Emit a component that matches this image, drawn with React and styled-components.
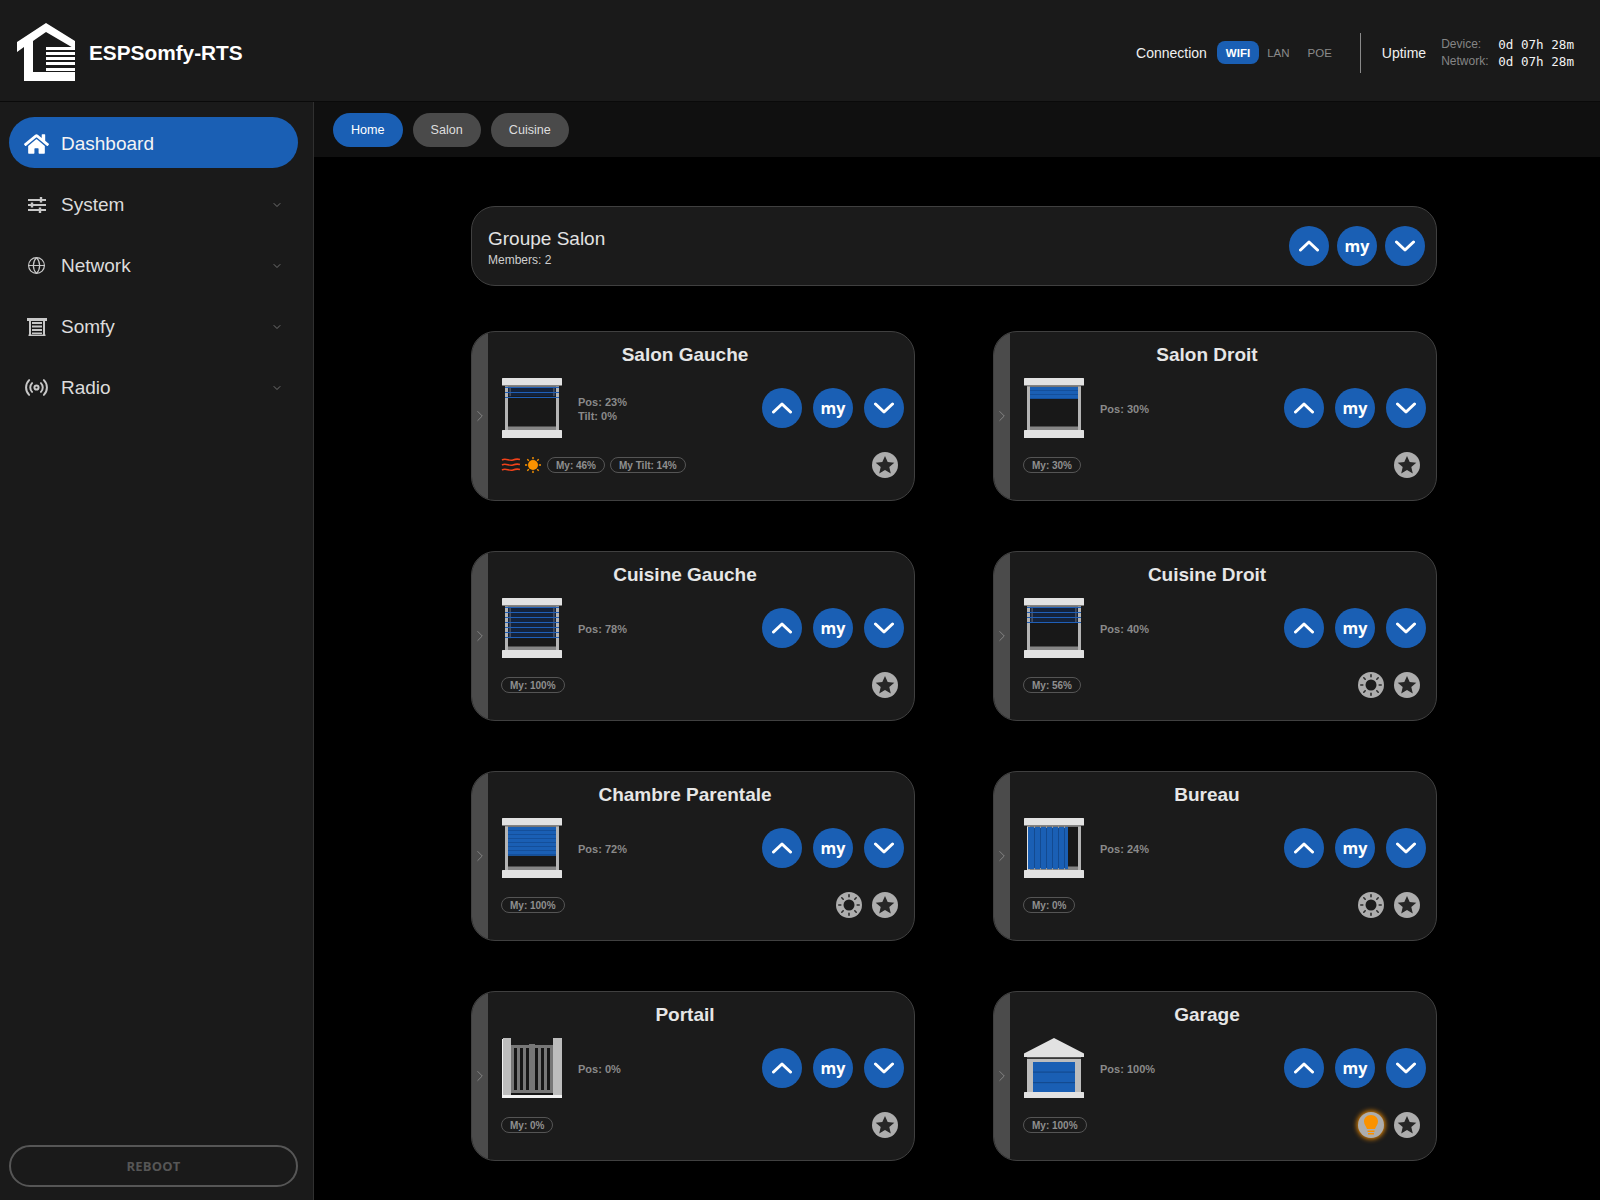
import React from "react";
import styled, { createGlobalStyle } from "styled-components";
import { FaHome } from "react-icons/fa";
import { ChevronDown, ChevronRight, Globe, Radio } from "lucide-react";

const BLUE = "#1a5fb4";

const GlobalStyle = createGlobalStyle`
  html, body {
    margin: 0;
    background: #000;
    font-family: "Liberation Sans", Arial, sans-serif;
  }
  * { box-sizing: border-box; }
`;

const Page = styled.div`
  display: grid;
  grid-template-rows: 102px 1fr;
  grid-template-columns: 314px 1fr;
  width: 1600px;
  height: 1200px;
  overflow: hidden;
  background: #000;
`;

const Header = styled.header`
  grid-column: 1 / 3;
  display: flex;
  align-items: center;
  padding: 4px 26px 0 16px;
  background: #1a1a1a;
  border-bottom: 1px solid #0a0a0a;
`;

const Brand = styled.div`
  display: flex;
  align-items: center;
  gap: 13px;
  margin-right: auto;
  color: #fff;
  font-size: 20.8px;
  font-weight: 700;
`;

const HeaderLabel = styled.span`
  color: #f0f0f0;
  font-size: 14px;
`;

const ConnectionChip = styled.span`
  display: flex;
  align-items: center;
  justify-content: center;
  height: 23px;
  padding: 0 9px;
  margin: ${(p) => (p.$active ? "0 -1px 0 10px" : "0")};
  border-radius: 8px;
  background: ${(p) => (p.$active ? BLUE : "transparent")};
  color: ${(p) => (p.$active ? "#fff" : "#8a8a8a")};
  font-size: 11.5px;
  font-weight: ${(p) => (p.$active ? 700 : 400)};
`;

const Divider = styled.div`
  width: 1px;
  height: 40px;
  margin: 0 21px 0 19px;
  background: #8a8a8a;
`;

const UptimeGrid = styled.div`
  display: grid;
  grid-template-columns: 49px auto;
  column-gap: 8px;
  margin-left: 15px;
  line-height: 17px;
  font-size: 12px;
  color: #858585;
`;

const UptimeValue = styled.span`
  color: #f2f2f2;
  font-family: "DejaVu Sans Mono", monospace;
  font-size: 12.6px;
`;

const Sidebar = styled.aside`
  display: flex;
  flex-direction: column;
  padding: 15px 15px 13px 9px;
  background: #1a1a1a;
  border-right: 1px solid #303030;
`;

const NavList = styled.nav`
  display: flex;
  flex-direction: column;
  gap: 10px;
`;

const NavItem = styled.div`
  display: flex;
  align-items: center;
  height: 51px;
  padding: 2px 15px 0 15px;
  border-radius: 26px;
  background: ${(p) => (p.$active ? BLUE : "transparent")};
  color: ${(p) => (p.$active ? "#f4f4f4" : "#dcdcdc")};
  font-size: 19px;
`;

const NavIcon = styled.span`
  display: flex;
  align-items: center;
  justify-content: center;
  width: 25px;
  margin-right: 12px;
  color: ${(p) => (p.$active ? "#fff" : "#c8c8c8")};
`;

const NavChevron = styled(ChevronDown)`
  margin-left: auto;
  color: #8d8d8d;
`;

const RebootButton = styled.button`
  height: 42px;
  margin-top: auto;
  border: 2px solid #565656;
  border-radius: 21px;
  background: transparent;
  color: #565656;
  font-family: "Open Sans", sans-serif;
  font-size: 13px;
  font-weight: 700;
  letter-spacing: 0.2px;
`;

const Main = styled.main`
  display: flex;
  flex-direction: column;
  min-width: 0;
`;

const TabBar = styled.div`
  display: flex;
  align-items: center;
  gap: 10px;
  height: 55px;
  padding-left: 19px;
  background: #101010;
`;

const Tab = styled.div`
  display: flex;
  align-items: center;
  height: 34px;
  padding: 0 18px;
  border-radius: 17px;
  background: ${(p) => (p.$active ? BLUE : "#4a4a4a")};
  color: ${(p) => (p.$active ? "#fff" : "#dedede")};
  font-size: 12.6px;
`;

const Content = styled.div`
  display: flex;
  flex-direction: column;
  gap: 45px;
  padding: 49px 163px 0 157px;
`;

const GroupCard = styled.section`
  display: flex;
  align-items: center;
  justify-content: space-between;
  height: 80px;
  padding: 0 11px 0 16px;
  border: 1px solid #404040;
  border-radius: 24px;
  background: #1b1b1b;
`;

const GroupTitle = styled.div`
  padding-top: 2px;
  color: #e2e2e2;
  font-size: 19px;
  line-height: 22px;
`;

const GroupMeta = styled.div`
  margin-top: 3px;
  color: #cfcfcf;
  font-size: 12px;
`;

const ShadeGrid = styled.div`
  display: grid;
  grid-template-columns: 444px 444px;
  justify-content: space-between;
  row-gap: 50px;
`;

const ShadeCard = styled.section`
  display: flex;
  height: 170px;
  overflow: hidden;
  border: 1px solid #404040;
  border-radius: 24px;
  background: #1b1b1b;
`;

const ShadeHandle = styled.div`
  display: flex;
  align-items: center;
  justify-content: center;
  flex: 0 0 16px;
  min-width: 0;
  background: #4b4b4b;
  color: #8e8e8e;
`;

const HandleChevron = styled(ChevronRight)`
  flex: none;
`;

const ShadeBody = styled.div`
  display: flex;
  flex: 1;
  flex-direction: column;
  min-width: 0;
  padding: 9px 10px 0 14px;
`;

const ShadeTitle = styled.h3`
  margin: 0;
  padding-right: 36px;
  color: #e6e6e6;
  font-size: 19px;
  font-weight: 700;
  line-height: 27px;
  text-align: center;
`;

const ShadeRow = styled.div`
  display: flex;
  align-items: center;
  height: 60px;
  margin-top: 10px;
`;

const Position = styled.div`
  margin-left: 16px;
  padding-top: 2px;
  color: #8a8a8a;
  font-size: 11px;
  font-weight: 700;
  line-height: 14px;
`;

const ButtonGroup = styled.div`
  display: flex;
  gap: ${(p) => (p.$tight ? "8px" : "11px")};
  margin-left: ${(p) => (p.$tight ? "0" : "auto")};
`;

const RoundButton = styled.div`
  display: flex;
  align-items: center;
  justify-content: center;
  width: 40px;
  height: 40px;
  border-radius: 50%;
  background: ${BLUE};
  color: #fff;
  font-family: "Open Sans", sans-serif;
  font-size: 16px;
  font-weight: 700;
`;

const ShadeFooter = styled.div`
  display: flex;
  align-items: center;
  height: 26px;
  margin: 14px 0 0 -1px;
`;

const Pill = styled.span`
  display: flex;
  align-items: center;
  height: 16px;
  margin-right: 5px;
  padding: 0 8px;
  border: 1px solid #555;
  border-radius: 8px;
  color: #8f8f8f;
  font-size: 10px;
  font-weight: 700;
`;

const WeatherIcons = styled.span`
  display: flex;
  align-items: center;
  gap: 4px;
  margin-right: 6px;
`;

const Badges = styled.div`
  display: flex;
  gap: 10px;
  margin-left: auto;
  margin-right: 6px;
`;

const Badge = styled.span`
  display: flex;
  align-items: center;
  justify-content: center;
  width: 26px;
  height: 26px;
  border-radius: 50%;
  background: #adadad;
  box-shadow: ${(p) => (p.$glow ? "0 0 5px 1px #f08c00" : "none")};
`;

const Logo = () => (
  <svg width="60" height="60" viewBox="0 0 60 60">
    <path
      fill="#fff"
      d="M30 0 L59 18 V26 L30 9 L17 18 V49 H59 V58 H8 V24 L1 29 V19 Z"
    />
    <path
      fill="#fff"
      d="M30 24 H59 V27 H30 Z M30 29 H59 V32 H30 Z M30 34 H59 V37 H30 Z M30 39 H59 V42 H30 Z M30 45 H59 V48 H30 Z"
    />
  </svg>
);

const SlidersIcon = () => (
  <svg width="20" height="18" viewBox="0 0 20 18" fill="none" stroke="#c8c8c8" strokeWidth="2">
    <path d="M1 4 H19 M1 9 H19 M1 14 H19" />
    <path strokeWidth="2.4" d="M14 1 V6.5 M5 6.5 V11.5 M13 11.5 V17" />
  </svg>
);

const SomfyIcon = () => (
  <svg width="20" height="18" viewBox="0 0 20 18" fill="#c8c8c8">
    <path d="M0 0 H20 V3 H0 Z M2 3 H4 V17 H2 Z M16 3 H18 V17 H16 Z M5 4 H15 V6 H5 Z M5 7.5 H15 V9.5 H5 Z M5 11 H15 V13 H5 Z M5 14.5 H15 V16 H5 Z M1.5 16.5 H18.5 V18 H1.5 Z" />
  </svg>
);

const UpChevron = () => (
  <svg width="20" height="12" viewBox="0 0 20 12" fill="none" stroke="#fff" strokeWidth="3" strokeLinecap="round" strokeLinejoin="round">
    <path d="M1.5 10 L10 2 L18.5 10" />
  </svg>
);

const DownChevron = () => (
  <svg width="20" height="12" viewBox="0 0 20 12" fill="none" stroke="#fff" strokeWidth="3" strokeLinecap="round" strokeLinejoin="round">
    <path d="M1.5 2 L10 10 L18.5 2" />
  </svg>
);

const Star = () => (
  <svg width="20" height="20" viewBox="0 0 20 20">
    <path fill="#262626" d="M10 1 L12.7 7 L19.3 7.7 L14.3 12 L15.8 18.5 L10 15 L4.2 18.5 L5.7 12 L.7 7.7 L7.3 7 Z" />
  </svg>
);

const SunBadge = () => (
  <svg width="26" height="26" viewBox="0 0 26 26">
    <circle cx="13" cy="13" r="5.5" fill="#1c1c1c" />
    <path
      stroke="#2c2c2c"
      strokeWidth="1.6"
      strokeLinecap="round"
      d="M13 2.8 V4.8 M13 21.2 V23.2 M2.8 13 H4.8 M21.2 13 H23.2 M5.8 5.8 L7.2 7.2 M18.8 18.8 L20.2 20.2 M5.8 20.2 L7.2 18.8 M18.8 7.2 L20.2 5.8"
    />
  </svg>
);

const Bulb = () => (
  <svg width="18" height="22" viewBox="0 0 18 22">
    <path fill="#fa9200" d="M9 1 C4.5 1 2 4 2 7.5 C2 10.5 4 12 5 15 H13 C14 12 16 10.5 16 7.5 C16 4 13.5 1 9 1 Z" />
    <path fill="#fa9200" d="M5.5 16.5 H12.5 V18 H5.5 Z M6 19 H12 V20.5 H6 Z" />
  </svg>
);

const WindIcon = () => (
  <svg width="20" height="16" viewBox="0 0 20 16" fill="none" stroke="#f0421a" strokeWidth="1.6">
    <path d="M1 3 C5 0.5 8 4.5 12 3 C15 1.8 17 2 19 2.5" />
    <path d="M1 8 C5 5.5 8 9.5 12 8 C15 6.8 17 7 19 7.5" />
    <path d="M1 13 C5 10.5 8 14.5 12 13 C15 11.8 17 12 19 12.5" />
  </svg>
);

const SunIcon = () => (
  <svg width="16" height="16" viewBox="0 0 16 16">
    <circle cx="8" cy="8" r="5" fill="#fa9200" />
    <path
      stroke="#fa9200"
      strokeWidth="1.4"
      d="M8 0 V2.2 M8 13.8 V16 M0 8 H2.2 M13.8 8 H16 M2.3 2.3 L3.8 3.8 M12.2 12.2 L13.7 13.7 M2.3 13.7 L3.8 12.2 M12.2 3.8 L13.7 2.3"
    />
  </svg>
);

const Frame = ({ children, left = 3, bottom = 52 }) => (
  <>
    <rect x="3" y="8" width="54" height="44" fill="#181818" />
    <rect x="6" y="48.5" width="48" height="3.5" fill="#858585" />
    <rect x={left} y="8" width="3" height="44" fill="#b4b4b4" />
    <rect x="54" y="8" width="3" height="44" fill="#b4b4b4" />
    {children}
    <rect x="0" y="0" width="60" height="7.6" rx="0.5" fill="#e2e2e2" />
    <rect x="3" y="7.6" width="54" height="1.2" fill="#8d8d8d" />
    <rect x="0" y={bottom} width="60" height={60 - bottom} rx="0.5" fill="#e2e2e2" />
  </>
);

// lames orientables : une ligne bleue tous les 5px
const Blind = ({ pos }) => {
  const end = 9 + (pos / 100) * 40;
  const lines = [];
  for (let y = 9; y <= end + 1; y += 5) lines.push(y);
  return (
    <Frame>
      <rect x="6" y="9" width="48" height={end - 9} fill="#14233c" />
      <rect x="7.5" y="9" width="1.2" height={end - 9} fill="#5b6270" />
      <rect x="51.3" y="9" width="1.2" height={end - 9} fill="#5b6270" />
      {lines.map((y) => (
        <rect key={y} x="3" y={y} width="54" height="1" fill="#1f5fb8" />
      ))}
    </Frame>
  );
};

const SolidShade = ({ pos }) => {
  const height = (pos / 100) * 40;
  const lines = [];
  for (let y = 12; y < 9 + height; y += 4) lines.push(y);
  return (
    <Frame>
      <rect x="6" y="9" width="48" height={height} fill={BLUE} />
      {lines.map((y) => (
        <rect key={y} x="6" y={y} width="48" height="0.7" fill="#134a90" />
      ))}
    </Frame>
  );
};

const Curtain = () => (
  <Frame>
    <rect x="3" y="8" width="1" height="44" fill="#e2e2e2" />
    <rect x="4" y="9" width="40" height="42" fill={BLUE} />
    {[10, 16, 22, 28, 34, 40].map((x) => (
      <g key={x}>
        <rect x={x} y="9" width="1" height="42" fill="#134a90" />
        <rect x={x} y="8" width="1" height="2" fill="#9a9a9a" />
        <rect x={x} y="50" width="1" height="2" fill="#9a9a9a" />
      </g>
    ))}
  </Frame>
);

const Gate = () => (
  <>
    <rect x="9" y="7" width="42" height="50" fill="#161616" />
    {[9, 15, 21, 36, 42, 48].map((x) => (
      <rect key={x} x={x} y="7" width="3" height="48" fill="#777" />
    ))}
    <rect x="27" y="6" width="6" height="49" fill="#777" />
    <rect x="9" y="7" width="42" height="3" fill="#777" />
    <rect x="9" y="52" width="42" height="3" fill="#777" />
    <rect x="1" y="0" width="8" height="57" fill="#bdbdbd" />
    <rect x="51" y="0" width="9" height="57" fill="#bdbdbd" />
    <rect x="0" y="1" width="1" height="59" fill="#f2f2f2" />
    <rect x="0" y="57" width="60" height="3" fill="#f2f2f2" />
  </>
);

const Garage = () => (
  <>
    <rect x="3" y="21" width="54" height="33" fill="#bdbdbd" />
    <rect x="9" y="24" width="42" height="30" fill={BLUE} />
    <rect x="9" y="33.5" width="42" height="1.2" fill="#134a90" />
    <rect x="9" y="44" width="42" height="1.2" fill="#134a90" />
    <rect x="3" y="19" width="54" height="1.5" fill="#555" />
    <path fill="#e2e2e2" d="M30 0 L60 15.5 V19 H0 V15.5 Z" />
    <rect x="0" y="54" width="60" height="6" rx="0.5" fill="#e2e2e2" />
  </>
);

const ShadeIcon = ({ kind, pos }) => (
  <svg width="60" height="60" viewBox="0 0 60 60">
    {kind === "blind" && <Blind pos={pos} />}
    {kind === "solid" && <SolidShade pos={pos} />}
    {kind === "curtain" && <Curtain />}
    {kind === "gate" && <Gate />}
    {kind === "garage" && <Garage />}
  </svg>
);

const Controls = ({ tight }) => (
  <ButtonGroup $tight={tight}>
    <RoundButton><UpChevron /></RoundButton>
    <RoundButton>my</RoundButton>
    <RoundButton><DownChevron /></RoundButton>
  </ButtonGroup>
);

const navItems = [
  { label: "System", icon: <SlidersIcon /> },
  { label: "Network", icon: <Globe size={19} strokeWidth={1.5} /> },
  { label: "Somfy", icon: <SomfyIcon /> },
  { label: "Radio", icon: <Radio size={25} strokeWidth={1.9} /> },
];

const shades = [
  { name: "Salon Gauche", kind: "blind", pos: 23, tilt: 0, pills: ["My: 46%", "My Tilt: 14%"], weather: true },
  { name: "Salon Droit", kind: "solid", pos: 30, pills: ["My: 30%"] },
  { name: "Cuisine Gauche", kind: "blind", pos: 78, pills: ["My: 100%"] },
  { name: "Cuisine Droit", kind: "blind", pos: 40, pills: ["My: 56%"], sun: true },
  { name: "Chambre Parentale", kind: "solid", pos: 72, pills: ["My: 100%"], sun: true },
  { name: "Bureau", kind: "curtain", pos: 24, pills: ["My: 0%"], sun: true },
  { name: "Portail", kind: "gate", pos: 0, pills: ["My: 0%"] },
  { name: "Garage", kind: "garage", pos: 100, pills: ["My: 100%"], bulb: true },
];

const ShadeTile = ({ shade }) => (
  <ShadeCard>
    <ShadeHandle><HandleChevron size={18} strokeWidth={1.1} /></ShadeHandle>
    <ShadeBody>
      <ShadeTitle>{shade.name}</ShadeTitle>
      <ShadeRow>
        <ShadeIcon kind={shade.kind} pos={shade.pos} />
        <Position>
          <div>Pos: {shade.pos}%</div>
          {shade.tilt !== undefined && <div>Tilt: {shade.tilt}%</div>}
        </Position>
        <Controls />
      </ShadeRow>
      <ShadeFooter>
        {shade.weather && (
          <WeatherIcons><WindIcon /><SunIcon /></WeatherIcons>
        )}
        {shade.pills.map((pill) => <Pill key={pill}>{pill}</Pill>)}
        <Badges>
          {shade.sun && <Badge><SunBadge /></Badge>}
          {shade.bulb && <Badge $glow><Bulb /></Badge>}
          <Badge><Star /></Badge>
        </Badges>
      </ShadeFooter>
    </ShadeBody>
  </ShadeCard>
);

const App = () => (
  <>
    <GlobalStyle />
    <Page>
      <Header>
        <Brand><Logo />ESPSomfy-RTS</Brand>
        <HeaderLabel>Connection</HeaderLabel>
        <ConnectionChip $active>WIFI</ConnectionChip>
        <ConnectionChip>LAN</ConnectionChip>
        <ConnectionChip>POE</ConnectionChip>
        <Divider />
        <HeaderLabel>Uptime</HeaderLabel>
        <UptimeGrid>
          <span>Device:</span>
          <UptimeValue>0d 07h 28m</UptimeValue>
          <span>Network:</span>
          <UptimeValue>0d 07h 28m</UptimeValue>
        </UptimeGrid>
      </Header>
      <Sidebar>
        <NavList>
          <NavItem $active>
            <NavIcon $active><FaHome size={26} /></NavIcon>
            Dashboard
          </NavItem>
          {navItems.map((item) => (
            <NavItem key={item.label}>
              <NavIcon>{item.icon}</NavIcon>
              {item.label}
              <NavChevron size={12} strokeWidth={1.5} />
            </NavItem>
          ))}
        </NavList>
        <RebootButton>REBOOT</RebootButton>
      </Sidebar>
      <Main>
        <TabBar>
          <Tab $active>Home</Tab>
          <Tab>Salon</Tab>
          <Tab>Cuisine</Tab>
        </TabBar>
        <Content>
          <GroupCard>
            <div>
              <GroupTitle>Groupe Salon</GroupTitle>
              <GroupMeta>Members: 2</GroupMeta>
            </div>
            <Controls tight />
          </GroupCard>
          <ShadeGrid>
            {shades.map((shade) => <ShadeTile key={shade.name} shade={shade} />)}
          </ShadeGrid>
        </Content>
      </Main>
    </Page>
  </>
);

export default App;
